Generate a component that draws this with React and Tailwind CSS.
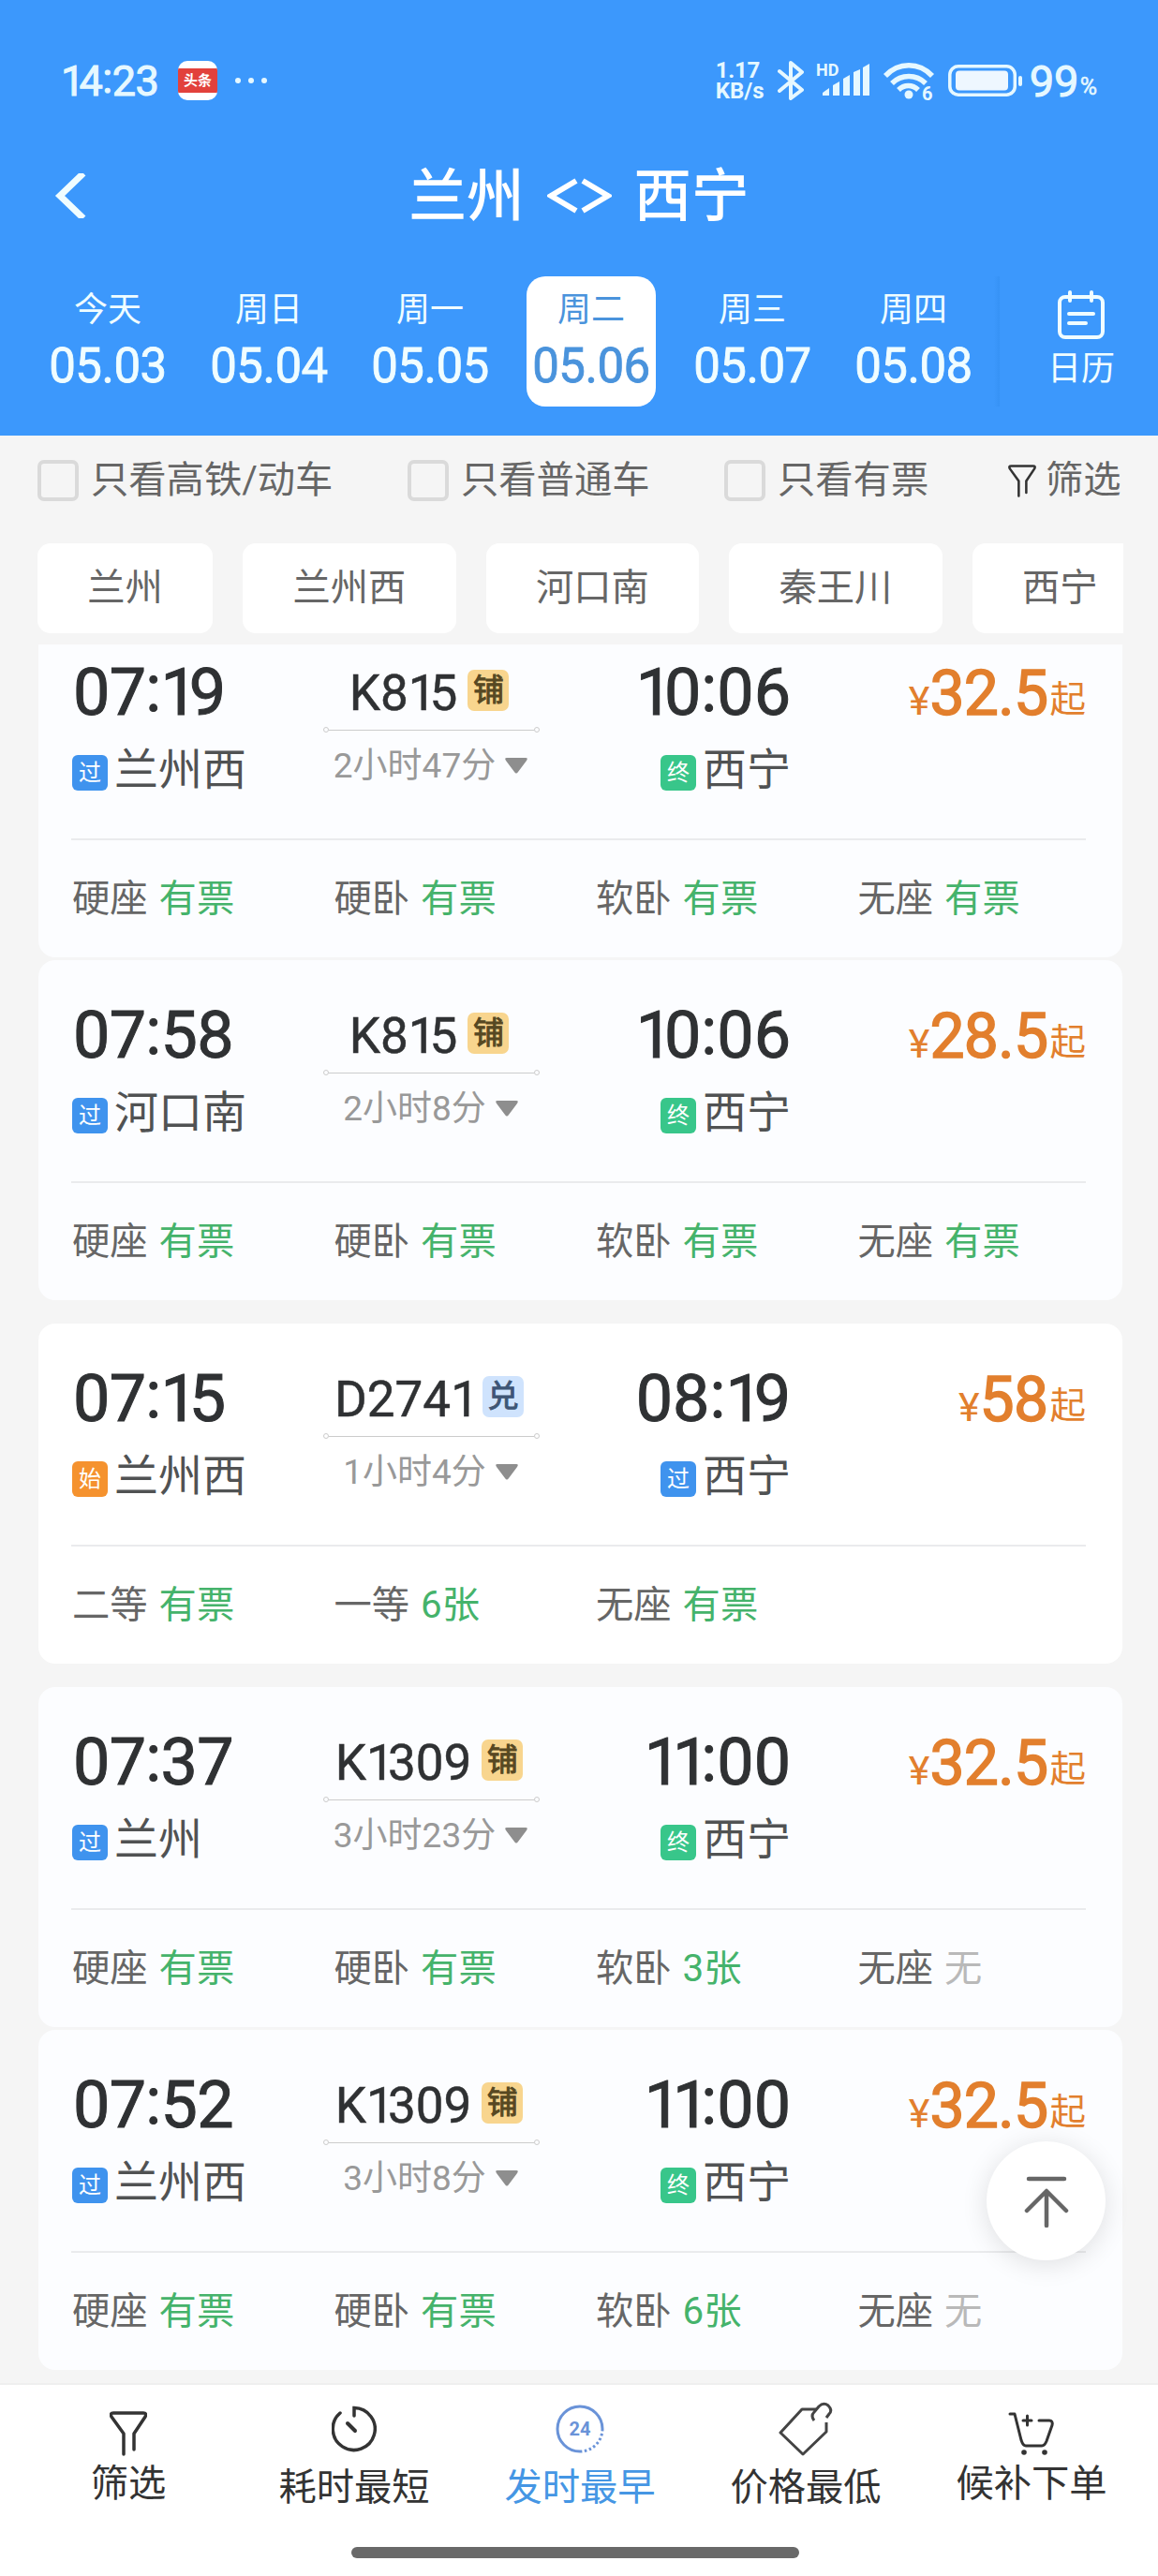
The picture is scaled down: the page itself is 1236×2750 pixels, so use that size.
const DAYS = [
    { week: '今天', date: '05.03' },
    { week: '周日', date: '05.04' },
    { week: '周一', date: '05.05' },
    { week: '周二', date: '05.06', active: true },
    { week: '周三', date: '05.07' },
    { week: '周四', date: '05.08' },
];

const STATIONS = ['兰州', '兰州西', '河口南', '秦王川', '西宁'];

const FULL = [
    ['硬座', '有票'],
    ['硬卧', '有票'],
    ['软卧', '有票'],
    ['无座', '有票'],
];

const TRAINS = [
    { depart: '07:19', from: '兰州西', fromTag: '过', no: 'K815', mark: '铺', duration: '2小时47分', arrive: '10:06', to: '西宁', toTag: '终', price: '32.5', seats: FULL, space: '-mt-[29px]' },
    { depart: '07:58', from: '河口南', fromTag: '过', no: 'K815', mark: '铺', duration: '2小时8分', arrive: '10:06', to: '西宁', toTag: '终', price: '28.5', seats: FULL, space: 'mt-[3px]' },
    { depart: '07:15', from: '兰州西', fromTag: '始', no: 'D2741', mark: '兑', duration: '1小时4分', arrive: '08:19', to: '西宁', toTag: '过', price: '58', seats: [['二等', '有票'], ['一等', '6张'], ['无座', '有票']], space: 'mt-[25px]', plain: true },
    { depart: '07:37', from: '兰州', fromTag: '过', no: 'K1309', mark: '铺', duration: '3小时23分', arrive: '11:00', to: '西宁', toTag: '终', price: '32.5', seats: [['硬座', '有票'], ['硬卧', '有票'], ['软卧', '3张'], ['无座', '无']], space: 'mt-[25px]' },
    { depart: '07:52', from: '兰州西', fromTag: '过', no: 'K1309', mark: '铺', duration: '3小时8分', arrive: '11:00', to: '西宁', toTag: '终', price: '32.5', seats: [['硬座', '有票'], ['硬卧', '有票'], ['软卧', '6张'], ['无座', '无']], space: 'mt-[3px]' },
];

const TAG_COLORS = {
    过: 'bg-[#3f93ee]',
    终: 'bg-[#38c68a]',
    始: 'bg-[#f5922e]',
};

const App = () => {
    return (
        <div className="flex h-[2750px] w-[1236px] flex-col overflow-hidden bg-[#f5f5f5] font-['Roboto','Noto_Sans_CJK_SC',sans-serif]">
            <header className="h-[465px] shrink-0 bg-[#3c98fc] text-[#f0fdff]">
                <StatusBar />
                <TitleBar />
                <DateStrip />
            </header>
            <FilterRow />
            <StationChips />
            <main className="relative mt-3 min-h-0 flex-1 overflow-hidden pr-[38px] pl-[41px]">
                {TRAINS.map((train) => (
                    <TrainCard key={train.depart} train={train} />
                ))}
                <BackToTop />
            </main>
            <BottomNav />
        </div>
    );
};

// Digits with a narrow 1 and a raised colon
const Digits = ({ value, className }) => (
    <span className={`block whitespace-nowrap ${className}`}>
        {value.split(/([1:])/).map((part, i) => {
            if (part === '1') return <span key={i} className="tracking-[-0.13em]">1</span>;
            if (part === ':') return <span key={i} className="relative -top-[0.06em]">:</span>;
            return part;
        })}
    </span>
);

const StatusBar = () => (
    <div className="flex h-[146px] items-center pt-[26px] pr-[63px] pl-[65px] leading-none text-[#e6f8ff]">
        <Digits value="14:23" className="w-[125px] text-[45px] tracking-[-0.01em] [-webkit-text-stroke:1px]" />
        <div className="flex h-[42px] w-[42px] items-center overflow-hidden rounded-[10px] bg-white">
            <div className="flex h-[26px] w-full items-center justify-center bg-[#e2413c] text-[15px] font-bold text-white">头条</div>
        </div>
        <div className="ml-[19px] flex gap-[8px]">
            <i className="h-[6px] w-[6px] rounded-full bg-[#e6f8ff]" />
            <i className="h-[6px] w-[6px] rounded-full bg-[#e6f8ff]" />
            <i className="h-[6px] w-[6px] rounded-full bg-[#e6f8ff]" />
        </div>
        <div className="ml-auto flex items-center">
            <div className="w-[66px] text-[24px] leading-[20px] font-bold">
                <div className="tracking-[-0.01em]">1.17</div>
                <div className="mt-[2px]">KB/s</div>
            </div>
            <svg className="h-[44px] w-[28px]" viewBox="0 0 28 44" fill="none" stroke="currentColor" strokeWidth="4" strokeLinejoin="round" strokeLinecap="round">
                <path d="M2 12 26 32 14 41V3l12 10L2 33" />
            </svg>
            <svg className="ml-[13px] h-[44px] w-[58px]" viewBox="0 0 58 44" fill="currentColor">
                <path d="M7 38v-3l7-5v8zM18 38V27l7-4v15zM29 38V20l7-4v22zM40 38V13l7-3v28zM50 38V8l7-4v34z" />
                <text x="0" y="17" fontSize="18" fontWeight="700">HD</text>
            </svg>
            <svg className="ml-[14px] h-[48px] w-[56px] overflow-visible" viewBox="0 -2 56 48" fill="none" stroke="currentColor" strokeWidth="5.500">
                <path d="M2 17C16 2 38 2 52 17M9 25c10-10 26-10 36 0M16 32c6-6 15-6 21 0" />
                <circle cx="27" cy="37" r="4.5" fill="currentColor" stroke="none" />
                <text x="41" y="43" fontSize="20" fontWeight="700" fill="currentColor" stroke="none">6</text>
            </svg>
            <svg className="ml-[13px] h-[34px] w-[80px]" viewBox="0 0 80 34" fill="none">
                <rect x="1.8" y="1.8" width="69.5" height="30.4" rx="9" stroke="currentColor" strokeWidth="3.5" />
                <rect x="8" y="6.500" width="56" height="21" rx="4" fill="#eef7ff" />
                <rect x="75" y="12" width="4" height="11" rx="2" fill="currentColor" />
            </svg>
            <span className="ml-[7px] w-[54px] text-[47px] [-webkit-text-stroke:1px]">99</span>
            <span className="mt-[13px] mr-[2px] text-[25px] [-webkit-text-stroke:0.5px]">%</span>
        </div>
    </div>
);

const TitleBar = () => (
    <div className="grid h-[126px] grid-cols-[200px_1fr_200px] items-center">
        <svg className="ml-[58px] h-[48px] w-[34px]" viewBox="0 0 34 48" fill="none" stroke="currentColor" strokeWidth="7">
            <path d="M31 0 6 24l25 24" />
        </svg>
        <h1 className="flex items-center justify-center gap-[24px] text-[61.5px] leading-none font-medium text-white">
            <span className="mt-[4px]">兰州</span>
            <svg className="h-[38px] w-[69px]" viewBox="0 0 69 38" fill="none" stroke="currentColor" strokeWidth="6">
                <path d="M31 3 4 19l27 16M38 3l27 16-27 16" />
            </svg>
            <span className="mt-[4px]">西宁</span>
        </h1>
    </div>
);

const DateStrip = () => (
    <div className="flex pt-[23px] pl-[29px]">
        {DAYS.map((day) => (
            <div key={day.date} className="flex w-[172px] shrink-0 justify-center">
                <div className={`flex h-[139px] w-[138px] flex-col items-center rounded-[20px] pt-[17px] ${day.active ? 'bg-white text-[#4a93dc]' : ''}`}>
                    <span className="text-[36px] leading-[38px]">{day.week}</span>
                    <span className="mt-[15px] text-[51px] leading-[51px] tracking-[-0.01em] [-webkit-text-stroke:0.8px]">{day.date}</span>
                </div>
            </div>
        ))}
        <div className="h-[139px] w-[6px] shrink-0 bg-gradient-to-r from-[#3c98fc] to-[#3692f5]" />
        <div className="flex w-[169px] flex-col items-center pt-[14px] pl-[5px]">
            <svg className="h-[54px] w-[52px]" viewBox="0 0 52 54" fill="none" stroke="currentColor" strokeWidth="4" strokeLinecap="round">
                <rect x="3" y="8" width="46" height="43" rx="6" />
                <path d="M14 3v9M37 3v9M13 26h26M13 36h18" />
            </svg>
            <span className="mt-[11px] text-[36px] leading-[40px]">日历</span>
        </div>
    </div>
);

const FilterRow = () => (
    <div className="flex h-[96px] shrink-0 items-center pl-[40px] text-[40.3px] leading-none text-[#666]">
        <Check label="只看高铁/动车" className="w-[395px]" />
        <Check label="只看普通车" className="w-[338px]" />
        <Check label="只看有票" className="w-[303px]" />
        <Funnel className="h-[35px] w-[30px] text-[#333]" />
        <span className="ml-[10px]">筛选</span>
    </div>
);

const Check = ({ label, className }) => (
    <label className={`flex items-center gap-[13px] ${className}`}>
        <span className="h-[44px] w-[44px] rounded-[7px] border-4 border-[#dadada]" />
        <span>{label}</span>
    </label>
);

const StationChips = () => (
    <div className="mt-[19px] mr-[37px] ml-[40px] flex h-[96px] shrink-0 gap-[32px] overflow-hidden text-[40.3px] leading-none text-[#666]">
        {STATIONS.map((name) => (
            <div key={name} className="flex shrink-0 items-center rounded-[14px] bg-white px-[53.3px]">{name}</div>
        ))}
    </div>
);

const TrainCard = ({ train }) => (
    <section className={`h-[363px] rounded-[18px] pr-[39px] pl-[35px] ${train.plain ? 'bg-white' : 'bg-[#fcfdff]'} ${train.space}`}>
        <div className="flex h-[238px] border-b-2 border-[#eaebed] leading-none">
            {/* Departure */}
            <div className="w-[269px] pt-[44px]">
                <Digits value={train.depart} className="h-[72px] pl-[2px] text-[70px] leading-[72px] tracking-[-0.01em] text-[#2f3133] [-webkit-text-stroke:1px]" />
                <Stop tag={train.fromTag} name={train.from} className="pl-px" />
            </div>

            {/* Train number and duration */}
            <div className="w-[231px] pt-[54px]">
                <div className="flex h-[52px] items-center justify-center gap-[11px] pr-[5px]">
                    <Digits value={train.no} className="mt-[3px] text-[53px] text-[#2f3133] [-webkit-text-stroke:0.5px]" />
                    <span className={`mb-[5px] flex h-[44px] w-[44px] items-center justify-center rounded-[7px] text-[33px] [-webkit-text-stroke:1px] ${train.mark === '铺' ? 'bg-[#f8d58e] text-[#574822]' : 'bg-[#cfe3fd] text-[#3e5575]'}`}>
                        {train.mark}
                    </span>
                </div>
                <div className="mt-[11px] flex items-center">
                    <i className="h-[6px] w-[6px] rounded-full border border-[#ccc]" />
                    <i className="h-px flex-1 bg-[#ccc]" />
                    <i className="h-[6px] w-[6px] rounded-full border border-[#ccc]" />
                </div>
                <div className="mt-[15px] flex h-[40px] items-center justify-center gap-[10px] pr-[2px] text-[37px] text-[#999]">
                    <span>{train.duration}</span>
                    <svg className="h-[17px] w-[24px]" viewBox="0 0 24 17" fill="#8e8e8e">
                        <path d="M2 0h20q3 0 1 3L14 15q-2 3-4 0L1 3Q-1 0 2 0z" />
                    </svg>
                </div>
            </div>

            {/* Arrival */}
            <div className="flex w-[268px] flex-col items-end pt-[44px]">
                <Digits value={train.arrive} className="h-[72px] text-[70px] leading-[72px] text-[#2f3133] [-webkit-text-stroke:1px]" />
                <Stop tag={train.toTag} name={train.to} />
            </div>

            {/* Price */}
            <div className="flex flex-1 items-baseline justify-end pt-[47px] text-[38px] text-[#e27f2d]">
                <span className="text-[43px]">¥</span>
                <span className="text-[66px] leading-[70px] tracking-[-0.01em] [-webkit-text-stroke:1.5px]">{train.price}</span>
                <span className="relative -top-[3px] ml-[2px] text-[38.5px]">起</span>
            </div>
        </div>
        <div className="flex h-[125px] items-center pt-px text-[40.3px] leading-none text-[#666]">
            {train.seats.map(([seat, left]) => (
                <div key={seat} className="flex w-[279.5px] shrink-0 gap-[12px] pl-px">
                    <span>{seat}</span>
                    <span className={left === '无' ? 'text-[#b9b9b9]' : 'text-[#45b36b]'}>{left}</span>
                </div>
            ))}
        </div>
    </section>
);

const Stop = ({ tag, name, className = '' }) => (
    <div className={`mt-[22px] flex h-[48px] items-center gap-[7px] ${className}`}>
        <span className={`mt-[7px] flex h-[38px] w-[38px] items-center justify-center rounded-[6px] text-[24px] text-white ${TAG_COLORS[tag]}`}>{tag}</span>
        <span className="mt-px text-[47px] text-[#505253]">{name}</span>
    </div>
);

const BackToTop = () => (
    <button className="absolute top-[1598px] right-[56px] flex h-[127px] w-[127px] items-center justify-center rounded-full bg-white shadow-[0_4px_28px_rgba(0,0,0,0.12)]">
        <svg className="h-[56px] w-[48px]" viewBox="0 0 48 56" fill="none" stroke="#666" strokeWidth="4.500" strokeLinecap="round" strokeLinejoin="round">
            <path d="M5 4h38M24 18v36M3 38l21-21 21 21" />
        </svg>
    </button>
);

const Funnel = ({ className }) => (
    <svg className={className} viewBox="0 0 40 48" fill="none" stroke="currentColor" strokeWidth="3.500" strokeLinecap="round" strokeLinejoin="round">
        <path d="M15 46V24L2 6Q0 2 4 2h32q4 0 2 4L26 24v17" />
    </svg>
);

const BottomNav = () => (
    <nav className="flex h-[206px] shrink-0 flex-col items-center border-t-2 border-[#efefef] bg-white">
        <div className="flex h-[173px] w-[1205px] pl-px text-[40.3px] leading-none text-[#333]">
            <NavItem label="筛选" raised>
                <Funnel className="h-[48px] w-[40px]" />
            </NavItem>
            <NavItem label="耗时最短">
                <svg className="h-[50px] w-[48px]" viewBox="0 0 48 50" fill="none" stroke="currentColor" strokeWidth="3.500" strokeLinecap="round">
                    <path d="M24 11V2.500A22.500 22.500 0 1 1 9 8" />
                    <path d="m17 19 8 8" strokeWidth="4" />
                </svg>
            </NavItem>
            <NavItem label="发时最早" active>
                <svg className="h-[52px] w-[52px]" viewBox="0 0 52 52" fill="none" stroke="#6a93d8" strokeWidth="3">
                    <path d="M26 50A24 24 0 1 1 50 26" />
                    <path d="M50 26A24 24 0 0 1 26 50" strokeDasharray="2.500 2.500" />
                    <text x="26" y="33" textAnchor="middle" fontSize="20" fontWeight="700" fill="#6a93d8" stroke="none">24</text>
                </svg>
            </NavItem>
            <NavItem label="价格最低">
                <svg className="h-[58px] w-[58px]" viewBox="0 0 58 58" fill="none" stroke="#444" strokeWidth="3" strokeLinejoin="round">
                    <path d="M41 8H25L2 33l24 23 25-24V22" />
                    <path d="M38 20q-4-5 0-9l5-6q5-5 10-1 5 5 1 9l-3 4" />
                </svg>
            </NavItem>
            <NavItem label="候补下单" raised>
                <svg className="h-[46px] w-[50px]" viewBox="0 0 50 46" fill="none" stroke="currentColor" strokeWidth="3" strokeLinecap="round" strokeLinejoin="round">
                    <path d="M2 2h5l7 28q2 6 5 6h17q3 0 5-5l6-17q1-5-3-5H33M16 9h9M20.500 4v10" />
                    <circle cx="17" cy="43" r="2.8" fill="currentColor" stroke="none" />
                    <circle cx="39" cy="43" r="2.8" fill="currentColor" stroke="none" />
                </svg>
            </NavItem>
        </div>
        <div className="mr-[8px] h-[12px] w-[478px] rounded-full bg-[#696969]" />
    </nav>
);

const NavItem = ({ label, raised, active, children }) => (
    <div className={`flex w-[241px] shrink-0 flex-col items-center ${active ? 'text-[#4596e4]' : ''}`}>
        <div className={`flex h-[84px] items-center ${raised ? 'pt-[20px]' : 'pt-[10px]'}`}>{children}</div>
        <span className={raised ? 'mt-[2px]' : 'mt-[6px]'}>{label}</span>
    </div>
);

export default App;
